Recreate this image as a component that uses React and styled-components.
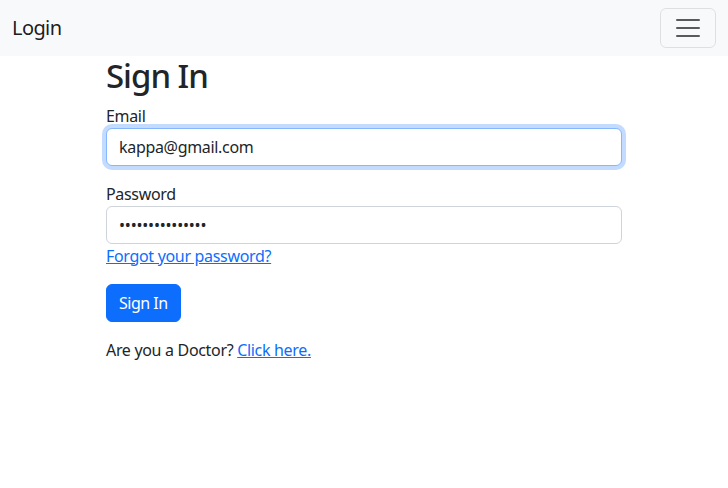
import React from "react";
import styled, { createGlobalStyle } from "styled-components";

const GlobalStyle = createGlobalStyle`
  *, *::before, *::after { box-sizing: border-box; }
  body {
    margin: 0;
    font-family: "Noto Sans", "Open Sans", sans-serif;
    font-size: 16px;
    line-height: 1.5;
    letter-spacing: -0.32px;
    color: #212529;
    background: #fff;
  }
`;

const Navbar = styled.nav`
  display: flex;
  align-items: center;
  justify-content: space-between;
  height: 56px;
  padding: 0 12px;
  background: #f8f9fa;
`;

const Brand = styled.a`
  font-size: 20px;
  line-height: 30px;
  letter-spacing: -0.6px;
  color: rgba(0, 0, 0, 0.9);
  text-decoration: none;
`;

const Toggler = styled.button`
  display: flex;
  align-items: center;
  justify-content: center;
  width: 56px;
  height: 40px;
  padding: 4px 12px;
  background: transparent;
  border: 1px solid rgba(0, 0, 0, 0.1);
  border-radius: 6px;
`;

const Container = styled.main`
  width: 540px;
  margin: 0 auto;
  padding: 0 12px;
`;

const Title = styled.h1`
  margin: 0 0 8px;
  font-size: 32.92px;
  font-weight: 500;
  line-height: 1.2;
  letter-spacing: -1px;
`;

const Group = styled.div`
  display: flex;
  flex-direction: column;
  margin-bottom: ${(p) => (p.gap ? "16px" : "0")};
`;

const Label = styled.label`
  display: block;
`;

const Input = styled.input`
  display: block;
  width: 100%;
  height: 38px;
  padding: 6px 12px;
  font: inherit;
  color: #212529;
  background: #fff;
  border: 1px solid ${(p) => (p.focused ? "#86b7fe" : "#ced4da")};
  border-radius: 6px;
  outline: none;
  box-shadow: ${(p) => (p.focused ? "0 0 0 4px rgba(13, 110, 253, 0.25)" : "none")};
  letter-spacing: ${(p) => (p.type === "password" ? "-0.2px" : "-0.32px")};
`;

const Link = styled.a`
  color: #0d6efd;
  text-decoration: underline;
`;

const Button = styled.button`
  display: inline-block;
  padding: 6px 12px;
  font: inherit;
  letter-spacing: -0.5px;
  color: #fff;
  background: #0d6efd;
  border: 1px solid #0d6efd;
  border-radius: 6px;
  margin-bottom: 16px;
`;

const Text = styled.p`
  margin: 0;
`;

function HamburgerIcon() {
  return (
    <svg width="30" height="30" viewBox="0 0 30 30">
      <path
        d="M4 7h22M4 15h22M4 23h22"
        stroke="rgba(33,37,41,0.75)"
        strokeWidth="2"
        strokeLinecap="round"
        strokeMiterlimit="10"
      />
    </svg>
  );
}

export default function App() {
  return (
    <>
      <GlobalStyle />
      <Navbar>
        <Brand href="#">Login</Brand>
        <Toggler aria-label="Toggle navigation">
          <HamburgerIcon />
        </Toggler>
      </Navbar>
      <Container>
        <Title>Sign In</Title>
        <Group gap>
          <Label>Email</Label>
          <Input type="email" focused defaultValue="kappa@gmail.com" />
        </Group>
        <Group gap>
          <Group>
            <Label>Password</Label>
            <Input type="password" defaultValue="passwordpasswo1" />
          </Group>
          <div>
            <Link href="#">Forgot your password?</Link>
          </div>
        </Group>
        <Button>Sign In</Button>
        <Text>
          Are you a Doctor? <Link href="#">Click here.</Link>
        </Text>
      </Container>
    </>
  );
}
